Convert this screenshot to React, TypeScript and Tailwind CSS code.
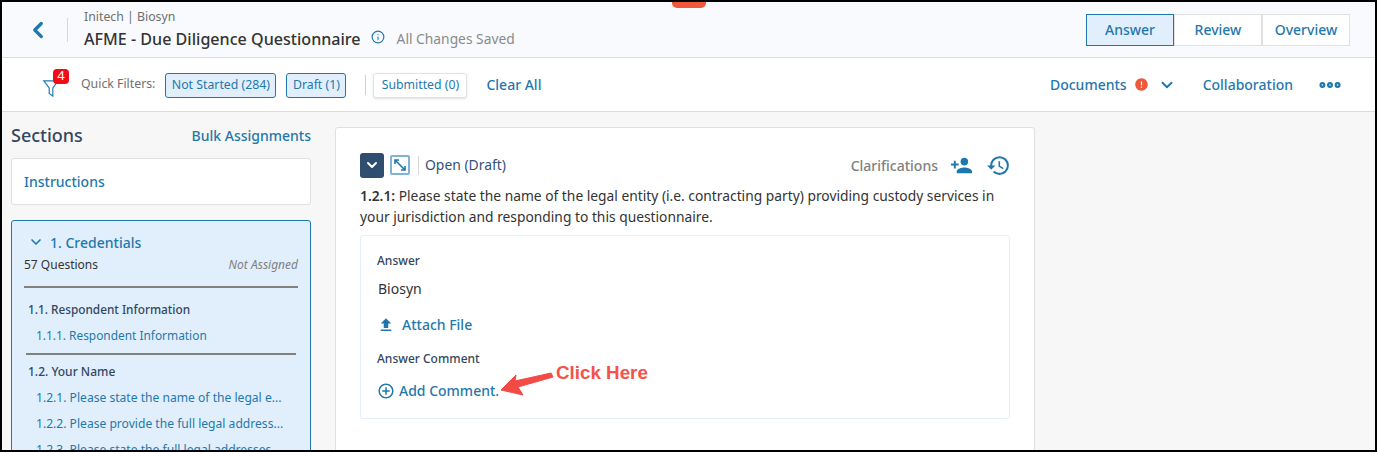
import { ChevronDown, ChevronLeft, Info, MoreHorizontal } from "lucide-react";
import { MdHistory, MdPersonAdd, MdFileUpload, MdAddCircleOutline, MdError } from "react-icons/md";

const FONT = "font-['Noto_Sans','Open_Sans',sans-serif]";

const tabs = [
  { label: "Answer", active: true },
  { label: "Review", active: false },
  { label: "Overview", active: false },
];

const subItems = [
  "1.2.1. Please state the name of the legal e...",
  "1.2.2. Please provide the full legal address...",
  "1.2.3. Please state the full legal addresses...",
];

const FilterPill = ({ label, active, width }: { label: string; active?: boolean; width: string }) => (
  <span
    className={`flex h-[25px] items-center justify-center rounded-[3px] border text-[12.3px] text-[#1f78ad] ${width} ${
      active ? "border-[#1f78ad] bg-[#e1effc]" : "border-[#e2e2e2] bg-white shadow-sm"
    }`}
  >
    {label}
  </span>
);

const Sidebar = () => (
  <aside className="h-[340px] w-[333px] shrink-0 overflow-hidden pl-[9px] pr-[24px]">
    <div className="flex h-[46px] items-center justify-between">
      <span className="text-[18px] font-medium text-[#33475f]">Sections</span>
      <span className="text-[14px] font-medium text-[#1f78ad]">Bulk Assignments</span>
    </div>
    <div className="flex h-[47px] items-center rounded-[3px] border border-[#e0e0e0] bg-white px-[12px] text-[14px] font-medium text-[#1f78ad]">
      Instructions
    </div>
    <div className="mt-[15px] h-[300px] rounded-[3px] border border-[#1f78ad] bg-[#e1effc] px-[12px] pt-[10px]">
      <div className="flex h-[22px] items-center text-[14px] font-medium text-[#1f78ad]">
        <ChevronDown size={16} strokeWidth={2.5} className="ml-[4px] mr-[6px]" />
        1. Credentials
      </div>
      <div className="mt-px flex h-[22px] items-center justify-between text-[12px] text-[#333]">
        <span>57 Questions</span>
        <span className="text-[12px] italic text-[#808080]">Not Assigned</span>
      </div>
      <div className="mt-[10px] h-[2px] bg-[#808080]" />
      <div className="ml-[4px] mt-[12px] text-[11.8px] font-medium leading-[18px] text-[#33475f]">
        1.1. Respondent Information
      </div>
      <div className="ml-[12px] mt-[8px] text-[11.9px] leading-[18px] text-[#1f78ad]">
        1.1.1. Respondent Information
      </div>
      <div className="mx-[2px] mt-[9px] h-[2px] bg-[#808080]" />
      <div className="ml-[4px] mt-[8px] text-[12px] font-medium leading-[18px] text-[#33475f]">
        1.2. Your Name
      </div>
      {subItems.map((item) => (
        <div className="ml-[12px] mt-[8px] whitespace-nowrap text-[12.1px] leading-[18px] text-[#1f78ad]" key={item}>
          {item}
        </div>
      ))}
    </div>
  </aside>
);

const QuestionCard = () => (
  <section className="h-[340px] w-[700px] shrink-0 rounded-[3px] border border-[#e0e0e0] bg-white px-[24px] pt-[24px]">
    <div className="flex h-[26px] items-center">
      <span className="flex h-[25px] w-[24px] items-center justify-center rounded-[3px] bg-[#2f4d6e]">
        <ChevronDown size={16} strokeWidth={3} className="text-white" />
      </span>
      <span className="ml-[6px] flex h-[20px] w-[20px] items-center justify-center rounded-[2px] border-2 border-[#7fb4d6]">
        <svg viewBox="0 0 14 14" className="h-[14px] w-[14px] text-[#1f78ad]" fill="none" stroke="currentColor" strokeWidth="1.6">
          <path d="M2 2 12 12M2 6V2h4M12 8v4H8" />
        </svg>
      </span>
      <span className="ml-[8px] h-[19px] w-px bg-[#d8d8d8]" />
      <span className="ml-[6px] text-[13.9px] text-[#33527a]">Open (Draft)</span>
      <span className="ml-auto text-[14px] font-medium text-[#808080]">Clarifications</span>
      <MdPersonAdd size={23} className="ml-[12px] text-[#1f78ad]" />
      <MdHistory size={25} className="ml-[13px] mr-[-1px] text-[#1f78ad]" />
    </div>
    <p className="mt-[7px] text-[13.8px] leading-[21px] text-[#333]">
      <b className="font-semibold">1.2.1:</b> Please state the name of the legal entity (i.e. contracting party) providing custody services in your jurisdiction and responding to this questionnaire.
    </p>
    <div className="mt-[8px] h-[184px] rounded-[3px] border border-[#e3f0fb] px-[16px] pt-[16px]">
      <div className="text-[12px] font-medium leading-[18px] text-[#33475f]">Answer</div>
      <div className="ml-px mt-[8px] text-[14px] leading-[21px] text-[#333]">Biosyn</div>
      <div className="mt-[15px] flex h-[21px] items-center text-[14px] font-medium text-[#1f78ad]">
        <MdFileUpload size={18} className="mr-[7px]" />
        Attach File
      </div>
      <div className="mt-[15px] text-[12px] font-medium leading-[18px] text-[#33475f]">Answer Comment</div>
      <div className="mt-[12px] flex h-[21px] items-center text-[14px] font-medium text-[#1f78ad]">
        <MdAddCircleOutline size={18} className="mr-[4px]" />
        Add Comment.
      </div>
    </div>
  </section>
);

export default function App() {
  return (
    <div className={`relative h-[452px] w-[1377px] overflow-hidden border-2 border-black bg-[#f7f7f7] ${FONT}`}>
      <header className="flex h-[56px] items-center border-b border-[#dcdcdc] bg-[#f8fafd] pl-[23px] pr-[25px]">
        <ChevronLeft size={26} strokeWidth={3} className="text-[#1f78ad]" />
        <span className="ml-[16px] h-[24px] w-px bg-[#d8d8d8]" />
        <div className="ml-[16px]">
          <div className="text-[12.3px] leading-[18px] text-[#6f6f6f]">Initech | Biosyn</div>
          <div className="mt-[1px] flex items-center">
            <span className="text-[16.1px] font-medium leading-[24px] text-[#333]">AFME - Due Diligence Questionnaire</span>
            <Info size={14} className="ml-[10px] mt-[-4px] text-[#1f78ad]" />
            <span className="ml-[12px] text-[13.8px] text-[#8a8a8a]">All Changes Saved</span>
          </div>
        </div>
        <div className="ml-auto flex">
          {tabs.map((tab) => (
            <span
              className={`flex h-[32px] w-[88px] items-center justify-center border text-[14px] font-medium text-[#1f78ad] ${
                tab.active ? "border-[#1f78ad] bg-[#e1effc]" : "border-[#e0e0e0] bg-white"
              }`}
              key={tab.label}
            >
              {tab.label}
            </span>
          ))}
        </div>
      </header>
      <div className="flex h-[54px] items-center border-b border-[#dcdcdc] bg-white pl-[40px] pr-[32px]">
        <span className="relative flex h-[24px] w-[20px] items-center">
          <svg viewBox="0 0 20 22" className="mt-[6px] h-[20px] w-[18px] text-[#1f78ad]" fill="none" stroke="currentColor" strokeWidth="1.3">
            <path d="M2 3h16l-6 8v9l-4-3v-6z" />
          </svg>
          <span className="absolute left-[11px] top-[-4px] flex h-[15px] w-[16px] items-center justify-center rounded-[4px] bg-[#f00d17] text-[13px] text-white">4</span>
        </span>
        <span className="ml-[19px] text-[12.3px] text-[#707070]">Quick Filters:</span>
        <span className="ml-[10px] mt-[2px]"><FilterPill active label="Not Started (284)" width="w-[111px]" /></span>
        <span className="ml-[10px] mt-[2px]"><FilterPill active label="Draft (1)" width="w-[60px]" /></span>
        <span className="ml-[19px] h-[20px] w-px bg-[#d0d0d0]" />
        <span className="ml-[7px] mt-[2px]"><FilterPill label="Submitted (0)" width="w-[94px]" /></span>
        <span className="ml-[19px] text-[14px] font-medium text-[#1f78ad]">Clear All</span>
        <span className="ml-auto text-[14px] font-medium text-[#1f78ad]">Documents</span>
        <MdError size={15} className="ml-[7px] text-[#f1583a]" />
        <ChevronDown size={18} strokeWidth={2.5} className="ml-[9px] text-[#1f78ad]" />
        <span className="ml-[27px] text-[14px] font-medium text-[#1f78ad]">Collaboration</span>
        <MoreHorizontal size={26} strokeWidth={3.5} className="ml-[24px] text-[#1f78ad]" />
      </div>
      <main className="flex">
        <Sidebar />
        <div className="mt-[15px]"><QuestionCard /></div>
      </main>
      <span className="absolute left-[670px] top-0 h-[6px] w-[34px] rounded-b-[5px] bg-[#f1583a]" />
      <svg viewBox="0 0 60 30" className="absolute left-[496px] top-[368px] h-[30px] w-[60px]" fill="#f44a46">
        <path d="M3 20 18 5 17 11 53 3 55 7 20 17 25 25z" stroke="#f44a46" strokeLinejoin="round" />
      </svg>
      <span className="absolute left-[554px] top-[357px] font-['Liberation_Sans',sans-serif] text-[18.8px] font-bold text-[#f8504a]">Click Here</span>
    </div>
  );
}
